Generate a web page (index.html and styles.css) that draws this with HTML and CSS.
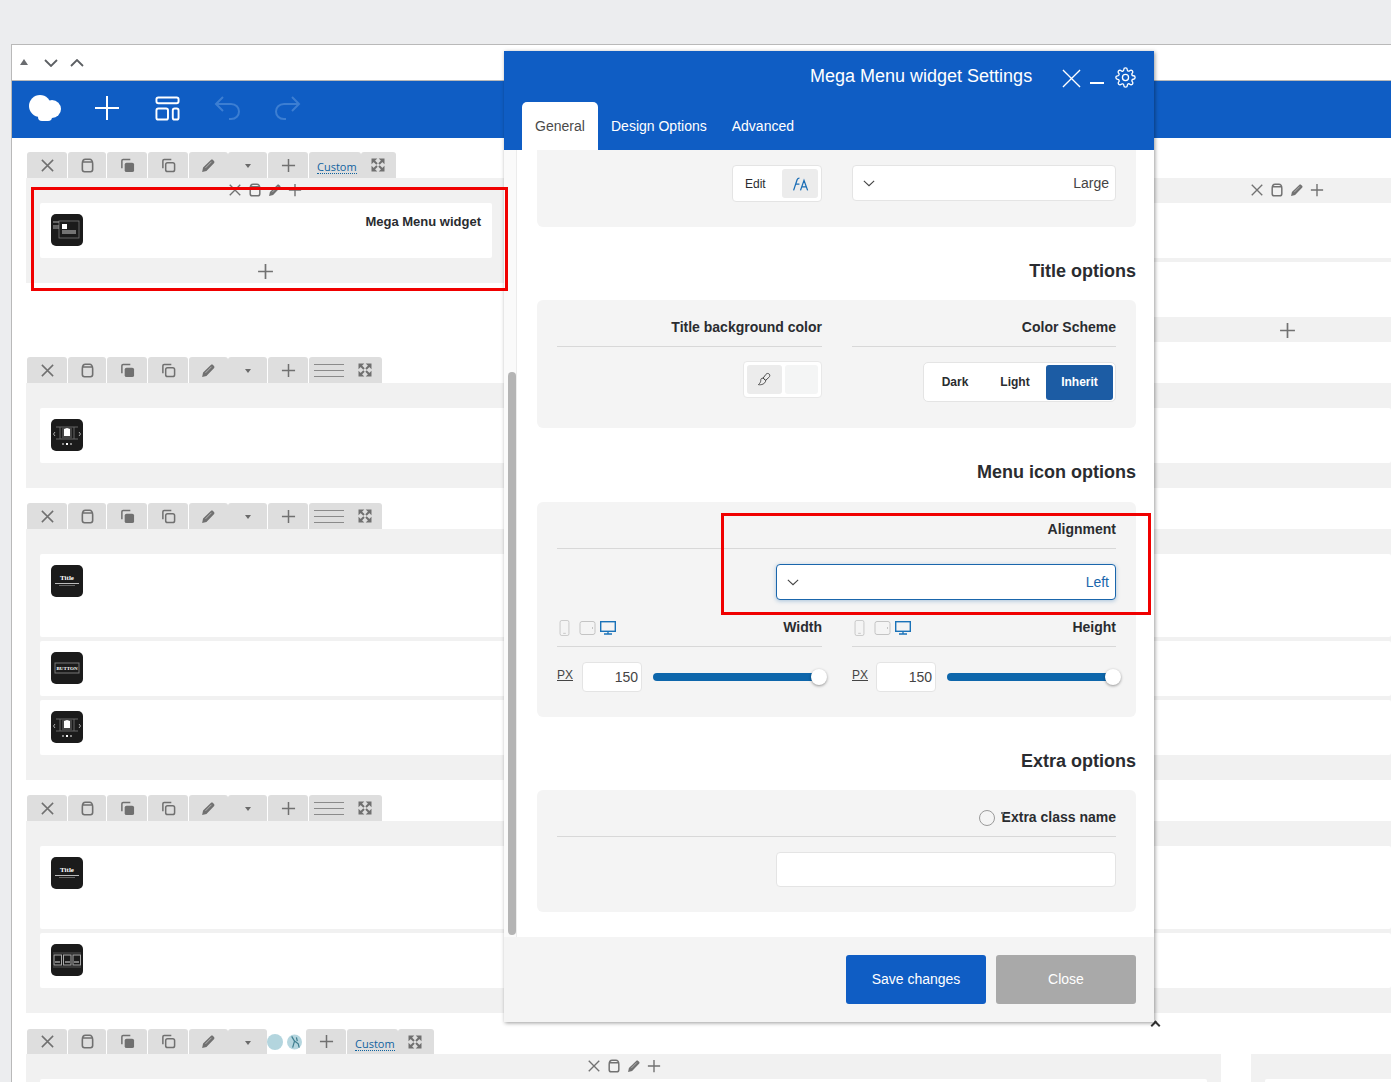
FILE: index.html
```html
<!DOCTYPE html>
<html>
<head>
<meta charset="utf-8">
<title>Mega Menu widget Settings</title>
<link rel="stylesheet" href="styles.css">
</head>
<body>

<svg class="defs" width="0" height="0">
  <symbol id="i-x" viewBox="0 0 16 16"><path d="M2 2l12 12M14 2L2 14" fill="none" stroke="currentColor" stroke-width="1.6"/></symbol>
  <symbol id="i-plus" viewBox="0 0 16 16"><path d="M8 1v14M1 8h14" fill="none" stroke="currentColor" stroke-width="1.6"/></symbol>
  <symbol id="i-clip" viewBox="0 0 16 16"><path d="M2.500 6c0-3 1.500-4.700 3.300-4.700h4.400c1.800 0 3.300 1.700 3.300 4.700v6.300c0 1.500-.9 2.400-2.400 2.400H4.900c-1.500 0-2.400-.9-2.400-2.400zM3.500 4.300h9" fill="none" stroke="currentColor" stroke-width="1.700"/></symbol>
  <symbol id="i-copy" viewBox="0 0 16 16"><path d="M2 11V3c0-.8.5-1.300 1.300-1.300H11" fill="none" stroke="currentColor" stroke-width="1.600"/><rect x="5" y="5" width="10" height="10" rx="2" fill="currentColor"/></symbol>
  <symbol id="i-copy2" viewBox="0 0 16 16"><path d="M2 11V3c0-.8.5-1.300 1.300-1.300H11" fill="none" stroke="currentColor" stroke-width="1.600"/><rect x="5" y="5" width="9.500" height="9.500" rx="2" fill="none" stroke="currentColor" stroke-width="1.600"/></symbol>
  <symbol id="i-pencil" viewBox="0 0 16 16"><path d="M1.200 14.800l1-4.600L10.500 2.200c.7-.7 1.600-.7 2.300 0l1 1c.7.7.7 1.600 0 2.300L5.800 13.800z" fill="currentColor"/><path d="M4.800 10.500L11.200 4" stroke="#d4d4d4" stroke-width=".7"/></symbol>
  <symbol id="i-expand" viewBox="0 0 14 14"><path d="M.5.500h5.800L.5 6.300zM13.500.500v5.800L7.700.500zM.5 13.500V7.700l5.800 5.800zM13.500 13.500H7.700l5.800-5.800z" fill="currentColor"/><path d="M2.500 2.500l3.500 3.500M11.500 2.500L8 6M2.500 11.500L6 8M11.500 11.500L8 8" stroke="currentColor" stroke-width="2"/></symbol>
  <symbol id="i-chev" viewBox="0 0 14 8"><path d="M1 1l6 5.500L13 1" fill="none" stroke="currentColor" stroke-width="1.300"/></symbol>
  <symbol id="t-menu" viewBox="0 0 32 32"><rect x="8" y="7" width="20" height="17" fill="none" stroke="#777" stroke-width=".8"/><rect x="11" y="10" width="5" height="5" fill="#fff"/><path d="M11 17h14M11 19h14" stroke="#ccc"/><path d="M2 8h6M2 12h6M2 14h6" stroke="#aaa"/></symbol>
  <symbol id="t-gallery" viewBox="0 0 32 32"><path d="M5 8h22M5 20h22M9 8v12M23 8v12" stroke="#666" fill="none"/><rect x="11" y="8" width="10" height="12" fill="#444"/><path d="M13 10l3-1 3 1v7h-6z" fill="#fff"/><path d="M4 13l-1.500 2L4 17M28 13l1.500 2L28 17" stroke="#aaa" fill="none"/><rect x="11" y="24" width="2" height="2" fill="#888"/><rect x="15" y="24" width="2" height="2" fill="#fff"/><rect x="19" y="24" width="2" height="2" fill="#888"/></symbol>
  <symbol id="t-columns" viewBox="0 0 32 32"><path d="M2 9h28M2 23h28" stroke="#555"/><rect x="3" y="11" width="7.500" height="10" fill="none" stroke="#aaa"/><rect x="12.500" y="11" width="7.500" height="10" fill="none" stroke="#aaa"/><rect x="22" y="11" width="7.500" height="10" fill="none" stroke="#aaa"/><path d="M4 18h5M14 18h5M23 18h5" stroke="#ddd"/></symbol>
</svg>

<div class="window">
  <div class="topbar">
    <span class="tri"></span>
    <svg class="chev-top" viewBox="0 0 14 8"><path d="M1 1l6 6 6-6" fill="none" stroke="currentColor" stroke-width="1.800"/></svg>
    <svg class="chev-top" viewBox="0 0 14 8"><path d="M1 7l6-6 6 6" fill="none" stroke="currentColor" stroke-width="1.800"/></svg>
  </div>

  <div class="navbar">
    <svg class="logo" viewBox="0 0 32 26"><circle cx="11" cy="11" r="11" fill="#fff"/><circle cx="23" cy="14" r="9" fill="#fff"/><rect x="9" y="16" width="14" height="10" rx="4" fill="#fff"/></svg>
    <svg class="nav-plus" viewBox="0 0 26 26"><path d="M13 1v24M1 13h24" stroke="#fff" stroke-width="2" fill="none"/></svg>
    <svg class="nav-layout" viewBox="0 0 26 26"><rect x="1.500" y="1.500" width="23" height="6" rx="2" fill="none" stroke="#fff" stroke-width="2"/><rect x="1.500" y="13" width="12" height="11.500" rx="2" fill="none" stroke="#fff" stroke-width="2"/><rect x="18.500" y="13" width="6" height="11.500" rx="2" fill="none" stroke="#fff" stroke-width="2"/></svg>
    <svg class="nav-undo" viewBox="0 0 28 24"><path d="M9 1L2 8l7 7M2 8h15c5 0 8 3.500 8 7.500S22 23 17 23h-2" fill="none" stroke="#3c7ed2" stroke-width="2"/></svg>
    <svg class="nav-redo" viewBox="0 0 28 24"><path d="M19 1l7 7-7 7M26 8H11c-5 0-8 3.500-8 7.500S6 23 11 23h2" fill="none" stroke="#3c7ed2" stroke-width="2"/></svg>
  </div>

  <div class="canvas">

    <div class="row-split">
      <div class="col">
        <div class="toolbar">
          <span class="tab"><svg class="ic"><use href="#i-x"/></svg></span>
          <span class="tab tab-n"><svg class="ic"><use href="#i-clip"/></svg></span>
          <span class="tab"><svg class="ic"><use href="#i-copy"/></svg></span>
          <span class="tab"><svg class="ic"><use href="#i-copy2"/></svg></span>
          <span class="tab tab-m"><svg class="ic"><use href="#i-pencil"/></svg></span>
          <span class="tab tab-m join"><span class="caret"></span></span>
          <span class="tab"><svg class="ic"><use href="#i-plus"/></svg></span>
          <span class="tab tab-custom"><span class="custom">Custom</span></span>
          <span class="tab tab-exp join"><svg class="ic-s"><use href="#i-expand"/></svg></span>
        </div>
        <div class="panel panel-short">
          <div class="band"><svg class="mi"><use href="#i-x"/></svg><svg class="mi"><use href="#i-clip"/></svg><svg class="mi"><use href="#i-pencil"/></svg><svg class="mi"><use href="#i-plus"/></svg></div>
          <div class="card card-h55 card-first">
            <svg class="thumb"><use href="#t-menu"/></svg>
            <span class="card-name">Mega Menu widget</span>
          </div>
          <div class="band"><svg class="mi mi-plus"><use href="#i-plus"/></svg></div>
        </div>
      </div>
      <div class="col col-right">
        <div class="band"><svg class="mi"><use href="#i-x"/></svg><svg class="mi"><use href="#i-clip"/></svg><svg class="mi"><use href="#i-pencil"/></svg><svg class="mi"><use href="#i-plus"/></svg></div>
        <div class="blank"></div>
        <div class="band band-thin"></div>
        <div class="blank"></div>
        <div class="band"><svg class="mi mi-plus"><use href="#i-plus"/></svg></div>
      </div>
    </div>

    <div class="toolbar">
      <span class="tab"><svg class="ic"><use href="#i-x"/></svg></span>
      <span class="tab tab-n"><svg class="ic"><use href="#i-clip"/></svg></span>
      <span class="tab"><svg class="ic"><use href="#i-copy"/></svg></span>
      <span class="tab"><svg class="ic"><use href="#i-copy2"/></svg></span>
      <span class="tab tab-m"><svg class="ic"><use href="#i-pencil"/></svg></span>
      <span class="tab tab-m join"><span class="caret"></span></span>
      <span class="tab"><svg class="ic"><use href="#i-plus"/></svg></span>
      <span class="tab tab-wide"><span class="lines"></span><svg class="ic-s"><use href="#i-expand"/></svg></span>
    </div>
    <div class="panel">
      <div class="card card-h55"><svg class="thumb"><use href="#t-gallery"/></svg></div>
    </div>

    <div class="toolbar">
      <span class="tab"><svg class="ic"><use href="#i-x"/></svg></span>
      <span class="tab tab-n"><svg class="ic"><use href="#i-clip"/></svg></span>
      <span class="tab"><svg class="ic"><use href="#i-copy"/></svg></span>
      <span class="tab"><svg class="ic"><use href="#i-copy2"/></svg></span>
      <span class="tab tab-m"><svg class="ic"><use href="#i-pencil"/></svg></span>
      <span class="tab tab-m join"><span class="caret"></span></span>
      <span class="tab"><svg class="ic"><use href="#i-plus"/></svg></span>
      <span class="tab tab-wide"><span class="lines"></span><svg class="ic-s"><use href="#i-expand"/></svg></span>
    </div>
    <div class="panel">
      <div class="card card-h83"><svg class="thumb" viewBox="0 0 32 32"><text x="16" y="15" text-anchor="middle" class="thumb-title">Title</text><path d="M4 18.500h24" stroke="#bbb"/><path d="M8 20.500h16" stroke="#666"/></svg></div>
      <div class="card card-h55"><svg class="thumb" viewBox="0 0 32 32"><rect x="4" y="11" width="24" height="10" fill="none" stroke="#777"/><text x="16" y="18" text-anchor="middle" class="thumb-btn">BUTTON</text></svg></div>
      <div class="card card-h55"><svg class="thumb"><use href="#t-gallery"/></svg></div>
    </div>

    <div class="toolbar">
      <span class="tab"><svg class="ic"><use href="#i-x"/></svg></span>
      <span class="tab tab-n"><svg class="ic"><use href="#i-clip"/></svg></span>
      <span class="tab"><svg class="ic"><use href="#i-copy"/></svg></span>
      <span class="tab"><svg class="ic"><use href="#i-copy2"/></svg></span>
      <span class="tab tab-m"><svg class="ic"><use href="#i-pencil"/></svg></span>
      <span class="tab tab-m join"><span class="caret"></span></span>
      <span class="tab"><svg class="ic"><use href="#i-plus"/></svg></span>
      <span class="tab tab-wide"><span class="lines"></span><svg class="ic-s"><use href="#i-expand"/></svg></span>
    </div>
    <div class="panel">
      <div class="card card-h83"><svg class="thumb" viewBox="0 0 32 32"><text x="16" y="15" text-anchor="middle" class="thumb-title">Title</text><path d="M4 18.500h24" stroke="#bbb"/><path d="M8 20.500h16" stroke="#666"/></svg></div>
      <div class="card card-h55"><svg class="thumb"><use href="#t-columns"/></svg></div>
    </div>

    <div class="toolbar toolbar-last">
      <span class="tab"><svg class="ic"><use href="#i-x"/></svg></span>
      <span class="tab tab-n"><svg class="ic"><use href="#i-clip"/></svg></span>
      <span class="tab"><svg class="ic"><use href="#i-copy"/></svg></span>
      <span class="tab"><svg class="ic"><use href="#i-copy2"/></svg></span>
      <span class="tab tab-m"><svg class="ic"><use href="#i-pencil"/></svg></span>
      <span class="tab tab-m join"><span class="caret"></span></span>
      <span class="spots join">
        <span class="spot"></span>
        <svg class="spot-pic" viewBox="0 0 16 16"><circle cx="8" cy="8" r="8" fill="#b5d6df"/><path d="M5 2l3 5-2 7M8 7l4 3 1 4M10 3l1 4" stroke="#3f7f90" stroke-width="1.300" fill="none"/></svg>
      </span>
      <span class="tab"><svg class="ic"><use href="#i-plus"/></svg></span>
      <span class="tab tab-custom tab-custom-b"><span class="custom">Custom</span></span>
      <span class="tab tab-exp tab-exp-b join"><svg class="ic-s"><use href="#i-expand"/></svg></span>
    </div>
    <div class="row-last">
      <div class="panel panel-main">
        <div class="band"><svg class="mi"><use href="#i-x"/></svg><svg class="mi"><use href="#i-clip"/></svg><svg class="mi"><use href="#i-pencil"/></svg><svg class="mi"><use href="#i-plus"/></svg></div>
        <div class="card card-h55"></div>
      </div>
      <div class="panel panel-side">
        <div class="band"></div>
        <div class="card card-h55"></div>
      </div>
    </div>

  </div>
</div>

<span class="modal-caret"></span>

<div class="modal">
  <div class="modal-head">
    <div class="modal-title">
      <span class="title-text">Mega Menu widget Settings</span>
      <svg class="head-x" viewBox="0 0 20 20"><path d="M1 1l18 18M19 1L1 19" stroke="#fff" stroke-width="1.400"/></svg>
      <span class="head-min"></span>
      <svg class="head-gear" viewBox="0 0 24 24" fill="none" stroke="#fff" stroke-width="1.500"><circle cx="12" cy="12" r="3.500"/><path d="M19.400 15a1.650 1.650 0 0 0 .33 1.820l.06.06a2 2 0 0 1 0 2.830 2 2 0 0 1-2.830 0l-.06-.06a1.650 1.650 0 0 0-1.820-.33 1.650 1.650 0 0 0-1 1.510V21a2 2 0 0 1-2 2 2 2 0 0 1-2-2v-.09A1.650 1.650 0 0 0 9 19.400a1.650 1.650 0 0 0-1.820.33l-.06.06a2 2 0 0 1-2.830 0 2 2 0 0 1 0-2.830l.06-.06a1.650 1.650 0 0 0 .33-1.820 1.650 1.650 0 0 0-1.510-1H3a2 2 0 0 1-2-2 2 2 0 0 1 2-2h.09A1.650 1.650 0 0 0 4.600 9a1.650 1.650 0 0 0-.33-1.820l-.06-.06a2 2 0 0 1 0-2.830 2 2 0 0 1 2.830 0l.06.06a1.650 1.650 0 0 0 1.820.33H9a1.650 1.650 0 0 0 1-1.510V3a2 2 0 0 1 2-2 2 2 0 0 1 2 2v.09a1.650 1.650 0 0 0 1 1.510 1.650 1.650 0 0 0 1.820-.33l.06-.06a2 2 0 0 1 2.830 0 2 2 0 0 1 0 2.830l-.06.06a1.650 1.650 0 0 0-.33 1.820V9a1.650 1.650 0 0 0 1.510 1H21a2 2 0 0 1 2 2 2 2 0 0 1-2 2h-.09a1.650 1.650 0 0 0-1.510 1z"/></svg>
    </div>
    <div class="modal-tabs">
      <span class="mtab mtab-on">General</span>
      <span class="mtab mtab-design">Design Options</span>
      <span class="mtab mtab-adv">Advanced</span>
    </div>
  </div>

  <div class="modal-body">
    <div class="set set-top">
      <div class="set-grid">
        <div class="ctl-end">
          <div class="edit-box">
            <span class="edit-label">Edit</span>
            <span class="edit-btn"><svg class="edit-ic" viewBox="0 0 16 16" fill="none" stroke="#1a6db5" stroke-width="1.200"><path d="M1.500 14.500L4.800 4.500c.4-1 1-1.500 2.200-1.500M3.200 8.500H7M8 14.500l3.300-9.500 3.400 9.500M9.300 11.200h4.200"/></svg></span>
          </div>
        </div>
        <div class="select"><svg class="sel-chev"><use href="#i-chev"/></svg><span>Large</span></div>
      </div>
    </div>

    <h3 class="set-head">Title options</h3>
    <div class="set set-pad26">
      <div class="set-grid">
        <div>
          <div class="field-label">Title background color</div>
          <div class="ctl-end ctl-color">
            <div class="color-box">
              <span class="brush"><svg class="brush-ic" viewBox="0 0 16 16" fill="none" stroke="#444" stroke-width="1"><path d="M6.500 6.500l3-4c1-1.200 2.500-1.200 3.500-.3s.8 2.500-.3 3.500l-3.700 3.300zM6.500 6.500c-2 0-2.500 1-2.500 2.500 0 1.500-.8 3-2.500 4.500 3 .5 7-.5 8-4.500z"/></svg></span>
              <span class="swatch"></span>
            </div>
          </div>
        </div>
        <div>
          <div class="field-label">Color Scheme</div>
          <div class="ctl-end ctl-scheme">
            <div class="scheme">
              <span class="opt opt-dark">Dark</span>
              <span class="opt opt-light">Light</span>
              <span class="opt opt-on">Inherit</span>
            </div>
          </div>
        </div>
      </div>
    </div>

    <h3 class="set-head set-head-b">Menu icon options</h3>
    <div class="set set-pad25">
      <div class="field-label">Alignment</div>
      <div class="select select-active"><svg class="sel-chev"><use href="#i-chev"/></svg><span>Left</span></div>
      <div class="set-grid set-grid-low">
        <div>
          <div class="field-label field-label-dev">
            <span class="devices">
              <svg class="dev-phone" viewBox="0 0 11 18"><rect x=".5" y=".5" width="10" height="17" rx="2" fill="none" stroke="#c4c4c4"/><path d="M4 15h3" stroke="#c4c4c4"/></svg>
              <svg class="dev-tablet" viewBox="0 0 16 14"><rect x=".5" y=".5" width="15" height="13" rx="2" fill="none" stroke="#c4c4c4"/><path d="M13 6v2" stroke="#c4c4c4"/></svg>
              <svg class="dev-desk" viewBox="0 0 16 14"><rect x=".7" y=".7" width="14.600" height="9.600" fill="none" stroke="#1a72b8" stroke-width="1.400"/><path d="M8 10.500v2M4 13h8" stroke="#1a72b8" stroke-width="1.300"/></svg>
            </span>
            <span>Width</span>
          </div>
          <div class="slide-row">
            <span class="px">PX</span>
            <span class="num">150</span>
            <span class="track"><span class="knob"></span></span>
          </div>
        </div>
        <div>
          <div class="field-label field-label-dev">
            <span class="devices">
              <svg class="dev-phone" viewBox="0 0 11 18"><rect x=".5" y=".5" width="10" height="17" rx="2" fill="none" stroke="#c4c4c4"/><path d="M4 15h3" stroke="#c4c4c4"/></svg>
              <svg class="dev-tablet" viewBox="0 0 16 14"><rect x=".5" y=".5" width="15" height="13" rx="2" fill="none" stroke="#c4c4c4"/><path d="M13 6v2" stroke="#c4c4c4"/></svg>
              <svg class="dev-desk" viewBox="0 0 16 14"><rect x=".7" y=".7" width="14.600" height="9.600" fill="none" stroke="#1a72b8" stroke-width="1.400"/><path d="M8 10.500v2M4 13h8" stroke="#1a72b8" stroke-width="1.300"/></svg>
            </span>
            <span>Height</span>
          </div>
          <div class="slide-row">
            <span class="px">PX</span>
            <span class="num">150</span>
            <span class="track"><span class="knob"></span></span>
          </div>
        </div>
      </div>
    </div>

    <h3 class="set-head">Extra options</h3>
    <div class="set">
      <div class="field-label field-label-radio"><span class="radio"></span><span class="extra-name">Extra class name</span></div>
      <div class="text-input"></div>
    </div>

    <span class="scroll-thumb"></span>
  </div>

  <div class="modal-foot">
    <span class="btn btn-save">Save changes</span>
    <span class="btn btn-close">Close</span>
  </div>
</div>

<div class="mark mark-widget"></div>
<div class="mark mark-align"></div>

</body>
</html>
```

FILE: styles.css
```css
/* Page and builder window */

html, body
{ margin: 0;
padding: 0;
}

body
{ position: relative;
height: 1082px;
overflow: hidden;
background-color: #ecedef;
font-family: "Liberation Sans", Arial, sans-serif;
color: #2a2c30;
}

.defs
{ position: absolute;
}

.window
{ width: 1379px;
height: 1037px;
margin: 44px 0 0 11px;
border-top: 1px solid #b9b9b9;
border-left: 1px solid #b9b9b9;
background-color: #fff;
overflow: hidden;
}

.topbar
{ display: flex;
align-items: center;
height: 35px;
border-bottom: 1px solid #b9b9b9;
padding-left: 8px;
color: #5c5f63;
}

.tri
{ width: 0;
height: 0;
border-left: 4.500px solid transparent;
border-right: 4.500px solid transparent;
border-bottom: 6px solid #6a6c70;
margin: 0 16px 0 0;
position: relative;
top: -1px;
}

.chev-top
{ width: 14px;
height: 8px;
margin-right: 12px;
}

.navbar
{ display: flex;
align-items: center;
height: 54px;
padding-bottom: 3px;
background-color: #0f5dc4;
}

.logo { width: 32px; height: 26px; margin: 0 33px 0 17px; }
.nav-plus { width: 26px; height: 26px; margin-right: 35px; }
.nav-layout { width: 25px; height: 25px; margin-right: 34px; }
.nav-undo { width: 28px; height: 24px; margin-right: 31px; }
.nav-redo { width: 28px; height: 24px; }

.canvas
{ padding: 14px 0 0 14px;
}

/* Row toolbars */

.toolbar
{ display: flex;
gap: 1px;
height: 26px;
color: #707070;
margin-left: 1px;
}

.tab
{ display: flex;
flex: none;
align-items: center;
justify-content: center;
width: 40px;
height: 26px;
background-color: #dedede;
border-radius: 3px 3px 0 0;
}

.tab-n { width: 38px; }
.tab-m { width: 39px; }
.join { margin-left: -1px; }
.tab-custom { width: 52px; justify-content: flex-start; padding-left: 8px; box-sizing: border-box; }
.tab-custom-b { width: 51px; }
.tab-exp { width: 35px; padding-right: 2px; box-sizing: border-box; }
.tab-exp-b { width: 36px; }
.tab-wide { width: 73px; justify-content: flex-start; padding-left: 5px; box-sizing: border-box; }

.ic { width: 15px; height: 15px; }
.ic-s { width: 14px; height: 14px; }

.caret
{ width: 0;
height: 0;
border-left: 3.500px solid transparent;
border-right: 3.500px solid transparent;
border-top: 4px solid #6a6a6a;
margin-top: 2px;
}

.lines
{ width: 30px;
height: 11px;
border-top: 1px solid #8a8a8a;
border-bottom: 1px solid #8a8a8a;
margin-right: 14px;
background: linear-gradient(#8a8a8a, #8a8a8a) center / 100% 1px no-repeat;
}

.custom
{ font-family: "Open Sans", sans-serif;
font-size: 11px;
line-height: 13px;
color: #10639e;
border-bottom: 1px dotted #10639e;
margin-top: 4px;
}

.spots
{ display: flex;
flex: none;
align-items: center;
width: 39px;
margin-right: -1px;
background-color: #fff;
}

.spot
{ width: 16px;
height: 16px;
border-radius: 50%;
background-color: #b3d5de;
margin-right: 4px;
}

.spot-pic { width: 15px; height: 16px; }

/* Rows, panels and cards */

.row-split
{ display: flex;
height: 205px;
}

.col
{ flex: none;
width: 478px;
}

.col-right
{ margin-left: 544px;
padding-top: 26px;
}

.panel
{ background-color: #f1f1f1;
padding: 25px 0 25px 14px;
margin-bottom: 15px;
}

.panel-short
{ padding: 0 12px 0 14px;
margin: 0;
}

.band
{ display: flex;
align-items: center;
justify-content: center;
gap: 6px;
height: 25px;
box-sizing: border-box;
padding-bottom: 2px;
background-color: #f1f1f1;
color: #727272;
}

.panel-short .band
{ margin-left: -14px;
margin-right: -12px;
}

.band-thin { height: 4px; padding: 0; }
.blank { height: 55px; }

.mi { width: 14px; height: 14px; }
.mi-plus { width: 17px; height: 17px; margin-top: 3px; }

.card
{ display: flex;
justify-content: space-between;
background-color: #fff;
border-radius: 2px;
padding: 11px;
box-sizing: border-box;
}

.card + .card { margin-top: 4px; }
.card-h55 { height: 55px; }
.card-h83 { height: 83px; }
.card-first { margin: 0; }

.thumb
{ width: 32px;
height: 32px;
border-radius: 5px;
background-color: #1b1b1b;
}

.thumb-title
{ font-family: "Liberation Serif", serif;
font-size: 7px;
font-weight: bold;
fill: #fff;
}

.thumb-btn
{ font-family: "Liberation Serif", serif;
font-size: 5px;
font-weight: bold;
fill: #fff;
}

.card-name
{ font-size: 13px;
font-weight: bold;
line-height: 15px;
}

.toolbar-last { height: 25px; margin-top: 16px; }
.toolbar-last .tab { height: 25px; }

.row-last
{ display: flex;
}

.panel-main
{ flex: none;
width: 1195px;
padding: 0 14px;
box-sizing: border-box;
margin: 0;
}

.panel-main .band, .panel-side .band
{ margin: 0 -14px;
}

.panel-side
{ flex: none;
width: 300px;
margin: 0 0 0 30px;
padding: 0 14px;
box-sizing: border-box;
}

/* Settings modal */

.modal
{ position: absolute;
left: 504px;
top: 51px;
width: 650px;
height: 971px;
display: flex;
flex-direction: column;
background-color: #fff;
box-shadow: 1px 1px 4px rgba(0, 0, 0, 0.4);
}

.modal-head
{ height: 99px;
background-color: #0f5dc4;
color: #fff;
}

.modal-title
{ display: flex;
align-items: center;
height: 51px;
padding-left: 306px;
}

.title-text { font-size: 18px; width: 252px; }
.head-x { width: 19px; height: 19px; margin: 4px 9px 0 0; }
.head-min { width: 14px; height: 2px; background-color: #fff; margin: 12px 11px 0 0; }
.head-gear { width: 21px; height: 21px; margin-top: 2px; }

.modal-tabs
{ display: flex;
padding-left: 18px;
}

.mtab
{ font-size: 14px;
height: 48px;
line-height: 48px;
}

.mtab-on
{ width: 76px;
text-align: center;
background-color: #fff;
color: #4a4a4a;
border-radius: 5px 5px 0 0;
}

.mtab-design { margin-left: 13px; }
.mtab-adv { margin-left: 25px; }

.modal-body
{ position: relative;
height: 787px;
padding: 0 18px 0 33px;
box-sizing: border-box;
overflow: hidden;
}

.modal-body::before
{ content: "";
position: absolute;
left: 0;
top: 0;
bottom: 0;
width: 12px;
background-color: #fafafa;
border-right: 1px solid #ececec;
}

.scroll-thumb
{ position: absolute;
left: 4px;
top: 222px;
width: 8px;
height: 563px;
border-radius: 4px;
background-color: #b4b4b4;
}

.set
{ background-color: #f4f4f4;
border-radius: 6px;
padding: 0 20px;
}

.set-pad26 { padding-bottom: 26px; }
.set-pad25 { padding-bottom: 25px; }

.set-top
{ height: 77px;
padding-top: 15px;
box-sizing: border-box;
border-radius: 0 0 6px 6px;
}

.set-head
{ margin: 0;
padding: 33px 0 18px;
font-size: 18px;
line-height: 22px;
font-weight: bold;
text-align: right;
color: #2a2c30;
}

.set-head-b { padding-bottom: 19px; }

.set-grid
{ display: grid;
grid-template-columns: 265px 264px;
column-gap: 30px;
}

.set-grid-low { margin-top: 16px; }

.field-label
{ height: 30px;
border-bottom: 1px solid #d8d8d8;
font-size: 14px;
font-weight: bold;
line-height: 22px;
text-align: right;
}

.set > .field-label:first-child, .set > .set-grid:first-child > div > .field-label
{ padding-top: 16px;
}

.field-label-dev
{ display: flex;
justify-content: space-between;
}

.devices
{ display: flex;
align-items: center;
gap: 8px;
height: 24px;
padding-left: 2px;
}

.dev-phone { width: 11px; height: 16px; }
.dev-tablet { width: 17px; height: 14px; margin-left: 1px; }
.dev-desk { width: 16px; height: 14px; margin-left: -4px; }

.field-label-radio
{ display: flex;
justify-content: flex-end;
align-items: flex-start;
}

.radio
{ width: 14px;
height: 14px;
border: 1px solid #9a9a9a;
border-radius: 50%;
margin-right: 7px;
position: relative;
top: 4px;
}

.extra-name
{ position: relative;
}

.extra-name::before
{ content: "";
position: absolute;
left: -1px;
top: 6px;
width: 3px;
height: 2px;
background-color: #777;
}

.ctl-end
{ display: flex;
justify-content: flex-end;
}

.edit-box
{ display: flex;
align-items: center;
justify-content: space-between;
width: 90px;
height: 37px;
box-sizing: border-box;
padding: 0 3px 0 12px;
background-color: #fff;
border: 1px solid #e4e4e4;
border-radius: 4px;
}

.edit-label { font-size: 12px; }

.edit-btn
{ display: flex;
align-items: center;
justify-content: center;
width: 36px;
height: 29px;
background-color: #ececec;
border-radius: 3px;
}

.edit-ic { width: 17px; height: 17px; }

.select
{ display: flex;
align-items: center;
justify-content: space-between;
height: 36px;
box-sizing: border-box;
padding: 0 6px 0 10px;
background-color: #fff;
border: 1px solid #e4e4e4;
border-radius: 4px;
font-size: 14px;
color: #444;
}

.sel-chev { width: 12px; height: 7px; color: #444; }

.select-active
{ width: 340px;
margin: 15px 0 0 auto;
border-color: #1a66ac;
color: #1a66ac;
box-shadow: 0 1px 4px rgba(26, 102, 172, 0.35);
}

.ctl-color { margin-top: 14px; }
.ctl-scheme { margin-top: 15px; }

.color-box
{ display: flex;
gap: 3px;
width: 79px;
height: 37px;
box-sizing: border-box;
padding: 3px;
background-color: #fff;
border: 1px solid #e8e8e8;
border-radius: 4px;
}

.brush
{ display: flex;
align-items: center;
justify-content: center;
width: 35px;
background-color: #ececec;
border-radius: 3px;
}

.brush-ic { width: 15px; height: 15px; }

.swatch
{ width: 34px;
background-color: #f4f5f5;
border-radius: 3px;
}

.scheme
{ display: flex;
align-items: center;
width: 193px;
height: 40px;
box-sizing: border-box;
background-color: #fff;
border: 1px solid #e4e4e4;
border-radius: 5px;
font-size: 12px;
font-weight: bold;
}

.opt { text-align: center; }
.opt-dark { width: 62px; }
.opt-light { width: 58px; margin-right: 2px; }

.opt-on
{ width: 67px;
height: 35px;
margin-top: 1px;
line-height: 35px;
background-color: #1c5ca4;
color: #fff;
border-radius: 3px;
}

.slide-row
{ display: flex;
align-items: center;
margin-top: 15px;
}

.px
{ flex: none;
width: 25px;
font-size: 12px;
text-decoration: underline;
position: relative;
top: -2px;
color: #444;
}

.set-grid-low > div + div .px { width: 24px; }

.num
{ flex: none;
width: 60px;
height: 30px;
box-sizing: border-box;
padding-right: 3px;
line-height: 29px;
text-align: right;
font-size: 14px;
background-color: #fff;
border: 1px solid #e4e4e4;
border-radius: 4px;
color: #444;
}

.track
{ position: relative;
flex: none;
width: 168px;
height: 8px;
margin-left: 11px;
background-color: #0d66ab;
border-radius: 4px;
}

.knob
{ position: absolute;
right: -6px;
top: -4px;
width: 16px;
height: 16px;
border-radius: 50%;
background-color: #fff;
box-shadow: 0 1px 3px rgba(0, 0, 0, 0.4);
}

.text-input
{ width: 340px;
height: 35px;
margin: 15px 0 0 auto;
box-sizing: border-box;
background-color: #fff;
border: 1px solid #e4e4e4;
border-radius: 4px;
}

.set:last-of-type { padding-bottom: 25px; }

.modal-foot
{ display: flex;
justify-content: flex-end;
gap: 10px;
height: 85px;
box-sizing: border-box;
padding: 18px 18px 0 0;
background-color: #f4f4f4;
}

.btn
{ width: 140px;
height: 49px;
line-height: 49px;
text-align: center;
font-size: 14px;
color: #fff;
border-radius: 3px;
}

.btn-save { background-color: #0f5dc4; }
.btn-close { background-color: #a9a9a9; }

.modal-caret
{ position: absolute;
left: 1152px;
top: 1022px;
width: 5px;
height: 5px;
border-top: 2px solid #333;
border-left: 2px solid #333;
transform: rotate(45deg);
}

/* Red annotation frames */

.mark
{ position: absolute;
box-sizing: border-box;
border: 3px solid #f00000;
}

.mark-widget { left: 31px; top: 187px; width: 477px; height: 104px; }
.mark-align { left: 721px; top: 513px; width: 430px; height: 102px; }
```
